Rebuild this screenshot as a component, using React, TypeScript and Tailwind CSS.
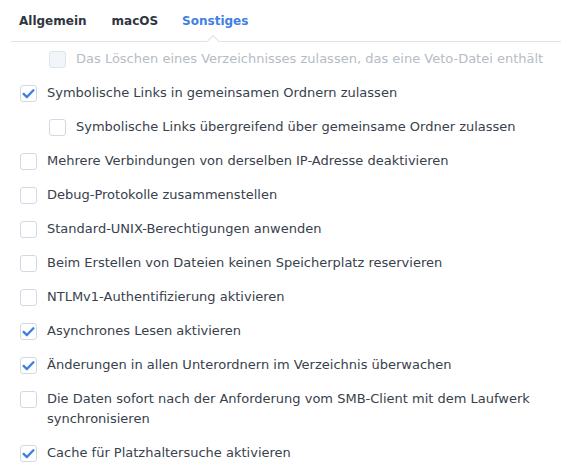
import React from "react";

type Item = {
  label: string;
  checked?: boolean;
  disabled?: boolean;
  indent?: boolean;
};

const items: Item[] = [
  { label: "Das Löschen eines Verzeichnisses zulassen, das eine Veto-Datei enthält", disabled: true, indent: true },
  { label: "Symbolische Links in gemeinsamen Ordnern zulassen", checked: true },
  { label: "Symbolische Links übergreifend über gemeinsame Ordner zulassen", indent: true },
  { label: "Mehrere Verbindungen von derselben IP-Adresse deaktivieren" },
  { label: "Debug-Protokolle zusammenstellen" },
  { label: "Standard-UNIX-Berechtigungen anwenden" },
  { label: "Beim Erstellen von Dateien keinen Speicherplatz reservieren" },
  { label: "NTLMv1-Authentifizierung aktivieren" },
  { label: "Asynchrones Lesen aktivieren", checked: true },
  { label: "Änderungen in allen Unterordnern im Verzeichnis überwachen", checked: true },
  { label: "Die Daten sofort nach der Anforderung vom SMB-Client mit dem Laufwerk synchronisieren" },
  { label: "Cache für Platzhaltersuche aktivieren", checked: true },
];

function Checkbox({ checked, disabled }: { checked?: boolean; disabled?: boolean }) {
  return (
    <span
      className={`flex h-[17px] w-[17px] shrink-0 items-center justify-center rounded-[3px] border ${
        disabled ? "border-[#dfe4ea] bg-[#f2f5f9]" : "border-[#d2d9e2] bg-white"
      }`}
    >
      {checked && (
        <svg viewBox="0 0 16 16" className="h-[15px] w-[15px]" fill="none">
          <path d="M2.8 8.4 6.3 11.8 13.2 4.6" stroke="#3d7fe0" strokeWidth={2.5} strokeLinecap="round" strokeLinejoin="round" />
        </svg>
      )}
    </span>
  );
}

export default function App() {
  return (
    <div className="h-[473px] w-[561px] overflow-hidden bg-white text-[13px] text-[#38414c]" style={{ fontFamily: '"DejaVu Sans", Verdana, sans-serif' }}>
      {/* Tabs */}
      <div className="relative ml-[11px] flex h-[42px] items-center border-b border-[#dde2e8] pl-2 text-[12px] font-bold">
        <span className="mr-[25px] text-[#2f3640]">Allgemein</span>
        <span className="mr-[24px] text-[#2f3640]">macOS</span>
        <span className="text-[#3f80e6]">Sonstiges</span>
        <span className="absolute bottom-[-1px] left-[195px] h-[7px] w-[14px] overflow-hidden">
          <span className="absolute left-[2px] top-[2px] h-[10px] w-[10px] rotate-45 border-l border-t border-[#dde2e8] bg-white" />
        </span>
      </div>

      {/* Options */}
      <div className="flex flex-col">
        {items.map((it) => (
          <div
            key={it.label}
            className={`flex gap-[10px] py-[7px] leading-[20px] ${it.indent ? "pl-[49px]" : "pl-5"}`}
          >
            <span className="flex h-5 items-center">
              <Checkbox checked={it.checked} disabled={it.disabled} />
            </span>
            <span className={`pr-3 ${it.disabled ? "text-[#b6bcc3]" : ""}`}>{it.label}</span>
          </div>
        ))}
      </div>
    </div>
  );
}
